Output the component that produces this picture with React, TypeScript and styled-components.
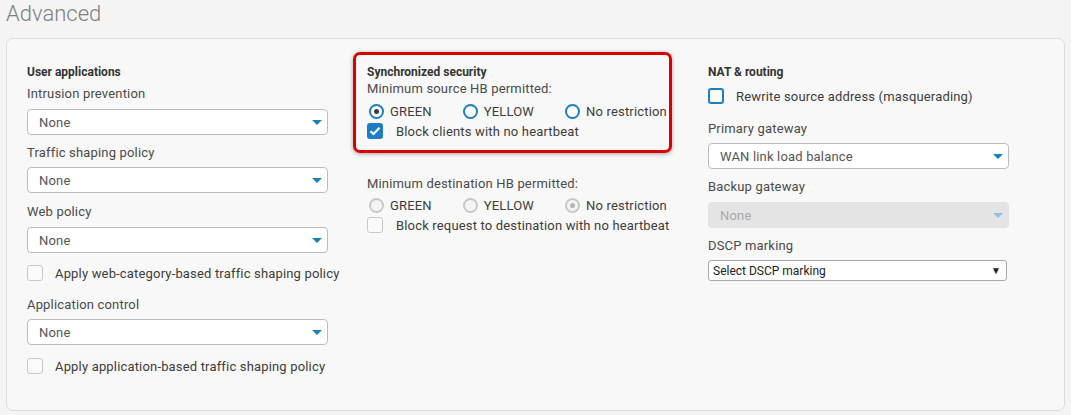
import styled, { createGlobalStyle, css } from "styled-components";

const GlobalStyle = createGlobalStyle`
    html, body {
        margin: 0;
        padding: 0;
        background-color: #f4f4f4;
        font-family: Roboto, "Liberation Sans", Arial, sans-serif;
    }
`;

const BLUE = "#1b7ec2";

const Page = styled.div`
    padding: 0 6px 5px 6px;
`;

const Title = styled.h2`
    margin: 0;
    font-size: 22px;
    font-weight: 300;
    line-height: 28px;
    color: #808080;
    padding-bottom: 10px;
`;

const Panel = styled.div`
    height: 373px;
    box-sizing: border-box;
    background-color: #f8f8f8;
    border: 1px solid #dcdcdc;
    border-radius: 7px;
    padding: 25px 20px 0 20px;
    display: grid;
    grid-template-columns: 340px 341px 340px;
`;

const Column = styled.div`
    display: flex;
    flex-direction: column;
    align-items: flex-start;
`;

const Heading = styled.div`
    font-size: 12px;
    font-weight: 700;
    line-height: 16px;
    color: #333;
`;

const Label = styled.div<{ $top?: number }>`
    font-size: 13px;
    line-height: 18px;
    letter-spacing: 0.17px;
    color: #4a4a4a;
    margin-top: ${(p) => p.$top ?? 0}px;
    white-space: nowrap;
`;

const SelectBox = styled.div<{ $top?: number; $disabled?: boolean }>`
    margin-top: ${(p) => p.$top ?? 6}px;
    width: 301px;
    height: 26px;
    box-sizing: border-box;
    border: 1px solid ${(p) => (p.$disabled ? "#e2e2e2" : "#bdbdbd")};
    border-radius: 4px;
    background-color: ${(p) => (p.$disabled ? "#e4e4e4" : "#ffffff")};
    display: flex;
    align-items: center;
    justify-content: space-between;
    padding: 0 5px 0 11px;
    font-size: 13px;
    letter-spacing: 0.17px;
    color: ${(p) => (p.$disabled ? "#a8a8a8" : "#555")};
`;

const Caret = styled.span<{ $disabled?: boolean }>`
    width: 0;
    height: 0;
    border-left: 5px solid transparent;
    border-right: 5px solid transparent;
    border-top: 5px solid ${(p) => (p.$disabled ? "#93c0e2" : BLUE)};
`;

const NativeSelect = styled.div`
    margin-top: 5px;
    width: 299px;
    height: 21px;
    box-sizing: border-box;
    border: 1px solid #a9a9a9;
    border-radius: 3px;
    background-color: #fff;
    display: flex;
    align-items: center;
    justify-content: space-between;
    padding: 0 5px 0 4px;
    font-size: 12px;
    color: #222;
`;

const SmallArrow = styled.span`
    font-size: 10px;
    color: #222;
`;

const Row = styled.div<{ $top?: number; $gap?: number }>`
    display: flex;
    align-items: center;
    height: 18px;
    margin-top: ${(p) => p.$top ?? 0}px;
    gap: ${(p) => p.$gap ?? 12}px;
    font-size: 13px;
    letter-spacing: 0.17px;
    color: #3c3c3c;
    white-space: nowrap;
`;

const Box = styled.span<{ $tone: "gray" | "blue" | "checked" }>`
    width: 16px;
    height: 16px;
    box-sizing: border-box;
    border-radius: 3px;
    display: inline-flex;
    align-items: center;
    justify-content: center;
    flex-shrink: 0;
    ${(p) =>
        p.$tone === "gray" &&
        css`
            border: 1.5px solid #c9c9c9;
            background: #fafafa;
        `}
    ${(p) =>
        p.$tone === "blue" &&
        css`
            border: 2px solid ${BLUE};
            background: #fff;
        `}
    ${(p) =>
        p.$tone === "checked" &&
        css`
            background: ${BLUE};
        `}
`;

const RadioGroup = styled.div<{ $top?: number }>`
    display: flex;
    align-items: center;
    gap: 31px;
    height: 18px;
    margin-top: ${(p) => p.$top ?? 0}px;
    padding-left: 2px;
    white-space: nowrap;
`;

const RadioItem = styled.div`
    display: flex;
    align-items: center;
    gap: 6px;
    font-size: 13px;
    letter-spacing: 0.17px;
    color: #3c3c3c;
`;

const Ring = styled.span<{ $disabled?: boolean; $on?: boolean }>`
    width: 15px;
    height: 15px;
    box-sizing: border-box;
    border-radius: 50%;
    border: 2px solid ${(p) => (p.$disabled ? "#c8c8c8" : BLUE)};
    background: ${(p) => (p.$disabled ? "#f4f4f4" : "#fff")};
    display: inline-flex;
    align-items: center;
    justify-content: center;
    flex-shrink: 0;
    &::after {
        content: "";
        display: ${(p) => (p.$on ? "block" : "none")};
        width: 5px;
        height: 5px;
        border-radius: 50%;
        background: ${(p) => (p.$disabled ? "#b5b5b5" : "#3a3a3a")};
    }
`;

const Highlight = styled.div`
    margin: -12px 0 0 -14px;
    width: 319px;
    box-sizing: border-box;
    border: 3px solid #d80000;
    border-radius: 7px;
    padding: 9px 0 10px 11px;
    box-shadow: 0 1px 4px rgba(0, 0, 0, 0.35);
    display: flex;
    flex-direction: column;
    align-items: flex-start;
`;

const Check = () => (
    <svg width="12" height="10" viewBox="0 0 12 10">
        <path d="M1.5 5.2 L4.5 8 L10.5 1.8" fill="none" stroke="#fff" strokeWidth="2.2" />
    </svg>
);

type Radio = { label: string; on?: boolean };

const Radios = ({ items, disabled, top }: { items: Radio[]; disabled?: boolean; top?: number }) => (
    <RadioGroup $top={top}>
        {items.map((r) => (
            <RadioItem key={r.label}>
                <Ring $disabled={disabled} $on={r.on} />
                {r.label}
            </RadioItem>
        ))}
    </RadioGroup>
);

const Select = ({ value, top, disabled }: { value: string; top?: number; disabled?: boolean }) => (
    <SelectBox $top={top} $disabled={disabled}>
        {value}
        <Caret $disabled={disabled} />
    </SelectBox>
);

function App() {
    return (
        <Page>
            <GlobalStyle />
            <Title>Advanced</Title>
            <Panel>
                <Column>
                    <Heading>User applications</Heading>
                    <Label $top={5}>Intrusion prevention</Label>
                    <Select value="None" />
                    <Label $top={9}>Traffic shaping policy</Label>
                    <Select value="None" top={5} />
                    <Label $top={10}>Web policy</Label>
                    <Select value="None" />
                    <Row $top={11}>
                        <Box $tone="gray" />
                        Apply web-category-based traffic shaping policy
                    </Row>
                    <Label $top={14}>Application control</Label>
                    <Select value="None" top={5} />
                    <Row $top={12}>
                        <Box $tone="gray" />
                        Apply application-based traffic shaping policy
                    </Row>
                </Column>

                <Column>
                    <Highlight>
                        <Heading>Synchronized security</Heading>
                        <Label>Minimum source HB permitted:</Label>
                        <Radios
                            top={4}
                            items={[{ label: "GREEN", on: true }, { label: "YELLOW" }, { label: "No restriction" }]}
                        />
                        <Row $top={2} $gap={13}>
                            <Box $tone="checked">
                                <Check />
                            </Box>
                            Block clients with no heartbeat
                        </Row>
                    </Highlight>
                    <Label $top={22}>Minimum destination HB permitted:</Label>
                    <Radios
                        top={3}
                        disabled
                        items={[{ label: "GREEN" }, { label: "YELLOW" }, { label: "No restriction", on: true }]}
                    />
                    <Row $top={2} $gap={13}>
                        <Box $tone="gray" />
                        Block request to destination with no heartbeat
                    </Row>
                </Column>

                <Column>
                    <Heading>NAT &amp; routing</Heading>
                    <Row $top={7}>
                        <Box $tone="blue" />
                        Rewrite source address (masquerading)
                    </Row>
                    <Label $top={15}>Primary gateway</Label>
                    <Select value="WAN link load balance" top={5} />
                    <Label $top={9}>Backup gateway</Label>
                    <Select value="None" disabled />
                    <Label $top={9}>DSCP marking</Label>
                    <NativeSelect>
                        Select DSCP marking
                        <SmallArrow>▼</SmallArrow>
                    </NativeSelect>
                </Column>
            </Panel>
        </Page>
    );
}

export default App;
